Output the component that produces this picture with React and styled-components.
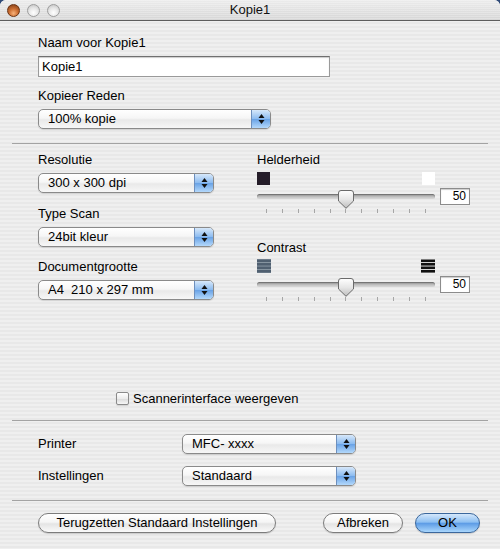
import React from "react";
import styled, { createGlobalStyle } from "styled-components";

const GlobalStyle = createGlobalStyle`
  html, body { margin: 0; padding: 0; background: #2f4a78; }
  body { font-family: "Liberation Sans", Arial, sans-serif; }
  * { box-sizing: border-box; }
`;

const FONT = `"Liberation Sans", Arial, sans-serif`;

const Window = styled.div`
  width: 500px;
  height: 549px;
  display: flex;
  flex-direction: column;
  overflow: hidden;
  border-radius: 6px 6px 0 0;
  font-family: ${FONT};
  color: #000;
  background: repeating-linear-gradient(
    to bottom,
    #efefef 0px,
    #efefef 2px,
    #e8e8e8 2px,
    #e8e8e8 4px
  );
`;

const TitleBar = styled.div`
  position: relative;
  height: 21px;
  flex: none;
  display: flex;
  align-items: center;
  justify-content: center;
  border-bottom: 1px solid #5d5d5d;
  background:
    repeating-linear-gradient(to bottom, rgba(255,255,255,0.25) 0 1px, rgba(0,0,0,0) 1px 2px),
    linear-gradient(to bottom, #ececec, #d6d6d6);
`;

const Lights = styled.div`
  position: absolute;
  left: 7px;
  top: 4px;
  display: flex;
  gap: 7px;
`;

const Light = styled.span`
  width: 13px;
  height: 13px;
  border-radius: 50%;
  border: 1px solid ${(p) => (p.$active ? "#6b3212" : "#9c9c9c")};
  background: ${(p) =>
    p.$active
      ? "radial-gradient(circle at 50% 75%, #f7b27a 0%, #cc6e32 45%, #7b3a14 100%)"
      : "radial-gradient(circle at 50% 70%, #ffffff 0%, #e6e6e6 50%, #bdbdbd 100%)"};
`;

const Title = styled.span`
  font-size: 13px;
  color: #111;
  line-height: 16px;
`;

const Section = styled.div`
  padding: ${(p) => p.$pad || "0"};
  display: flex;
  flex-direction: column;
  align-items: flex-start;
`;

const Label = styled.div`
  font-size: 13px;
  line-height: 16px;
  height: 16px;
  margin-top: ${(p) => p.$mt || 0}px;
  white-space: nowrap;
`;

const TextField = styled.input`
  margin-top: 5px;
  width: 292px;
  height: 21px;
  border: 1px solid #9a9a9a;
  border-top-color: #6f6f6f;
  box-shadow: inset 0 1px 1px rgba(0, 0, 0, 0.2);
  background: #fff;
  font-family: ${FONT};
  font-size: 13px;
  padding: 0 3px;
  color: #000;
  outline: none;
`;

const PopupBody = styled.div`
  margin-top: ${(p) => (p.$mt === undefined ? 5 : p.$mt)}px;
  width: ${(p) => p.$w}px;
  height: 20px;
  display: flex;
  border: 1px solid #8a8a8a;
  border-radius: 5px;
  background: linear-gradient(to bottom, #ffffff 0%, #f6f6f6 45%, #e9e9e9 55%, #f7f7f7 100%);
  box-shadow: 0 1px 1px rgba(0, 0, 0, 0.12);
  overflow: hidden;
`;

const PopupText = styled.span`
  flex: 1;
  padding-left: 9px;
  font-size: 13px;
  line-height: 18px;
  white-space: pre;
  overflow: hidden;
`;

const PopupArrows = styled.span`
  width: 19px;
  flex: none;
  display: flex;
  align-items: center;
  justify-content: center;
  border-left: 1px solid #6d8fbd;
  background: linear-gradient(to bottom, #d7e8fa 0%, #8dbcf0 48%, #6aa3e6 52%, #b3d8fb 100%);
`;

function Popup({ value, width, mt }) {
  return (
    <PopupBody $w={width} $mt={mt}>
      <PopupText>{value}</PopupText>
      <PopupArrows>
        <svg width="7" height="12" viewBox="0 0 7 12">
          <path d="M3.5 1 L6.5 5 L0.5 5 Z" fill="#111" />
          <path d="M3.5 11 L6.5 7 L0.5 7 Z" fill="#111" />
        </svg>
      </PopupArrows>
    </PopupBody>
  );
}

const Separator = styled.div`
  margin: ${(p) => p.$mt || 0}px 12px 0 12px;
  height: 1px;
  flex: none;
  background: #a3a3a3;
`;

const ParamGrid = styled.div`
  display: grid;
  grid-template-columns: 176px 213px;
  column-gap: 43px;
  padding: 8px 0 0 38px;
`;

const Column = styled.div`
  display: flex;
  flex-direction: column;
  align-items: flex-start;
`;

const SliderBlock = styled.div`
  display: flex;
  flex-direction: column;
  margin-top: ${(p) => p.$mt || 0}px;
`;

const IconRow = styled.div`
  margin-top: 3px;
  width: 178px;
  height: 14px;
  display: flex;
  justify-content: space-between;
  align-items: center;
`;

const Swatch = styled.span`
  width: 13px;
  height: 13px;
  background: ${(p) => p.$c};
`;

const SliderRow = styled.div`
  margin-top: 3px;
  display: flex;
  align-items: center;
  gap: 5px;
  height: 17px;
`;

const TrackArea = styled.div`
  position: relative;
  width: 178px;
  height: 17px;
`;

const Track = styled.div`
  position: absolute;
  left: 0;
  right: 0;
  top: 6px;
  height: 5px;
  border-radius: 3px;
  background: linear-gradient(to bottom, #8e8e8e, #c4c4c4 60%, #d8d8d8);
  box-shadow: inset 0 1px 1px rgba(0, 0, 0, 0.25);
`;

const Thumb = styled.svg`
  position: absolute;
  top: 2px;
  width: 16px;
  height: 19px;
  margin-left: -8px;
`;

const ValueBox = styled.div`
  width: 30px;
  height: 17px;
  border: 1px solid #8c8c8c;
  box-shadow: inset 0 1px 1px rgba(0, 0, 0, 0.2);
  background: #fff;
  font-size: 12px;
  line-height: 15px;
  text-align: right;
  padding-right: 3px;
`;

const Ticks = styled.div`
  margin-top: 4px;
  width: 178px;
  padding: 0 9px;
  height: 4px;
  display: flex;
  justify-content: space-between;
`;

const Tick = styled.span`
  width: 1px;
  height: 4px;
  background: #a6a6a6;
`;

function BarsIcon({ dark }) {
  const ys = [0.5, 4, 7.5, 11];
  return (
    <svg width="14" height="14" viewBox="0 0 14 14">
      {!dark && <rect x="0" y="0" width="14" height="14" fill="#8d9aa6" />}
      {ys.map((y) => (
        <rect
          key={y}
          x="0"
          y={y}
          width="14"
          height="2.6"
          fill={dark ? "#111" : "#4f5f70"}
        />
      ))}
    </svg>
  );
}

const TRACK_W = 178;
const THUMB_W = 16;

function Slider({ label, value, left, right, mt }) {
  const thumbCenter = THUMB_W / 2 + ((TRACK_W - THUMB_W) * value) / 100;
  return (
    <SliderBlock $mt={mt}>
      <Label>{label}</Label>
      <IconRow>
        {left}
        {right}
      </IconRow>
      <SliderRow>
        <TrackArea>
          <Track />
          <Thumb viewBox="0 0 16 19" style={{ left: `${thumbCenter}px` }}>
            <defs>
              <linearGradient id={`thumb-${label}`} x1="0" y1="0" x2="0" y2="1">
                <stop offset="0" stopColor="#ffffff" />
                <stop offset="0.5" stopColor="#e6e6e6" />
                <stop offset="1" stopColor="#bdbdbd" />
              </linearGradient>
            </defs>
            <path
              d="M3 0.5 H13 Q15.5 0.5 15.5 3 V11 L8 18.3 L0.5 11 V3 Q0.5 0.5 3 0.5 Z"
              fill={`url(#thumb-${label})`}
              stroke="#6a6a6a"
              strokeWidth="1"
            />
          </Thumb>
        </TrackArea>
        <ValueBox>{value}</ValueBox>
      </SliderRow>
      <Ticks>
        {Array.from({ length: 11 }).map((_, i) => (
          <Tick key={i} />
        ))}
      </Ticks>
    </SliderBlock>
  );
}

const CheckRow = styled.label`
  margin-top: 89px;
  padding-left: 116px;
  display: flex;
  align-items: center;
  gap: 4px;
  height: 16px;
  font-size: 13px;
`;

const CheckBox = styled.span`
  width: 13px;
  height: 13px;
  border: 1px solid #8a8a8a;
  border-radius: 2px;
  background: linear-gradient(to bottom, #ffffff, #ececec 50%, #dcdcdc 55%, #f6f6f6);
  box-shadow: 0 1px 1px rgba(0, 0, 0, 0.12);
`;

const FormGrid = styled.div`
  display: grid;
  grid-template-columns: 144px 174px;
  row-gap: 12px;
  padding: 13px 0 0 38px;
  align-items: center;
`;

const ButtonRow = styled.div`
  margin-top: 12px;
  padding: 0 20px 0 38px;
  display: flex;
  align-items: center;
`;

const Button = styled.button`
  height: 20px;
  width: ${(p) => p.$w}px;
  margin-left: ${(p) => p.$ml || 0}px;
  border-radius: 10px;
  border: 1px solid ${(p) => (p.$primary ? "#3b679c" : "#7c7c7c")};
  background: ${(p) =>
    p.$primary
      ? "linear-gradient(to bottom, #d4e7fb 0%, #8ec0f2 45%, #5d9ce6 52%, #a9d6fc 100%)"
      : "linear-gradient(to bottom, #ffffff 0%, #f5f5f5 45%, #e4e4e4 55%, #fafafa 100%)"};
  box-shadow: 0 1px 1px rgba(0, 0, 0, 0.15);
  font-family: ${FONT};
  font-size: 13px;
  line-height: 16px;
  color: #000;
  padding: 0;
  white-space: nowrap;
`;

export default function App() {
  return (
    <>
      <GlobalStyle />
      <Window>
        <TitleBar>
          <Lights>
            <Light $active />
            <Light />
            <Light />
          </Lights>
          <Title>Kopie1</Title>
        </TitleBar>

        <Section $pad="14px 0 0 38px">
          <Label>Naam voor Kopie1</Label>
          <TextField readOnly defaultValue="Kopie1" />
          <Label $mt={11}>Kopieer Reden</Label>
          <Popup value="100% kopie" width={233} />
        </Section>

        <Separator $mt={14} />

        <ParamGrid>
          <Column>
            <Label>Resolutie</Label>
            <Popup value="300 x 300 dpi" width={176} />
            <Label $mt={13}>Type Scan</Label>
            <Popup value="24bit kleur" width={176} />
            <Label $mt={12}>Documentgrootte</Label>
            <Popup value="A4  210 x 297 mm" width={176} />
          </Column>
          <Column>
            <Slider
              label="Helderheid"
              value={50}
              left={<Swatch $c="#241c28" />}
              right={<Swatch $c="#ffffff" />}
            />
            <Slider
              label="Contrast"
              value={50}
              mt={27}
              left={<BarsIcon />}
              right={<BarsIcon dark />}
            />
          </Column>
        </ParamGrid>

        <CheckRow>
          <CheckBox />
          Scannerinterface weergeven
        </CheckRow>

        <Separator $mt={14} />

        <FormGrid>
          <Label>Printer</Label>
          <Popup value="MFC- xxxx" width={174} mt={0} />
          <Label>Instellingen</Label>
          <Popup value="Standaard" width={174} mt={0} />
        </FormGrid>

        <Separator $mt={14} />

        <ButtonRow>
          <Button $w={238}>Terugzetten Standaard Instellingen</Button>
          <Button $w={80} $ml={47}>Afbreken</Button>
          <Button $w={65} $ml={12} $primary>OK</Button>
        </ButtonRow>
      </Window>
    </>
  );
}
